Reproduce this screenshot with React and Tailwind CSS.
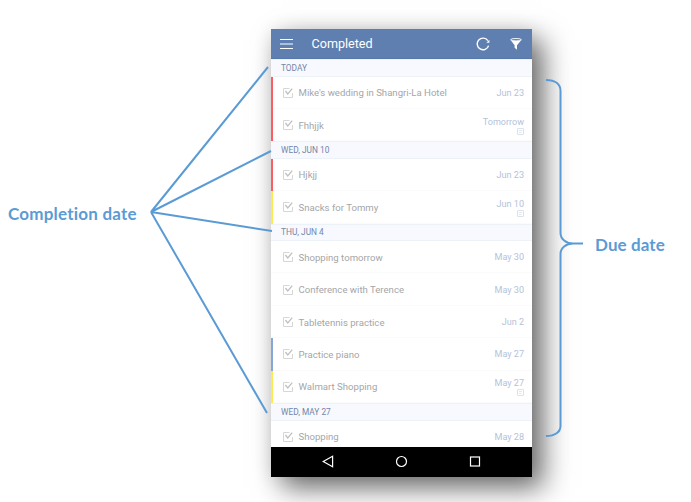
import React from "react";

const sections = [
  {
    title: "TODAY",
    rows: [
      { text: "Mike's wedding in Shangri-La Hotel", date: "Jun 23", bar: "bg-[#fb5d60]" },
      { text: "Fhhjjk", date: "Tomorrow", note: true, bar: "bg-[#fb5d60]" },
    ],
  },
  {
    title: "WED, JUN 10",
    rows: [
      { text: "Hjkjj", date: "Jun 23", bar: "bg-[#fb5d60]" },
      { text: "Snacks for Tommy", date: "Jun 10", note: true, bar: "bg-[#fdec4f]" },
    ],
  },
  {
    title: "THU, JUN 4",
    rows: [
      { text: "Shopping tomorrow", date: "May 30" },
      { text: "Conference with Terence", date: "May 30" },
      { text: "Tabletennis practice", date: "Jun 2" },
      { text: "Practice piano", date: "May 27", bar: "bg-[#86a6d8]" },
      { text: "Walmart Shopping", date: "May 27", note: true, bar: "bg-[#fdec4f]" },
    ],
  },
  { title: "WED, MAY 27", rows: [{ text: "Shopping", date: "May 28" }] },
];

function CheckIcon() {
  return (
    <svg className="ml-[9px] h-[12px] w-[12px] shrink-0" viewBox="0 0 12 12" fill="none">
      <path d="M7.5 1.5H1.5V10.5H10.5V6" stroke="#d6d6d6" strokeWidth="1" />
      <path d="M3.4 4L5.8 7L10.2 1.6" stroke="#c0c0c0" strokeWidth="1.3" />
    </svg>
  );
}

function NoteIcon() {
  return (
    <svg className="h-[7px] w-[7px]" viewBox="0 0 7 7" fill="none" stroke="#dbe2ee">
      <rect x="0.5" y="0.5" width="6" height="6" rx="0.5" />
      <path d="M2 2.5H5M2 4.5H4.5" strokeWidth="0.8" />
    </svg>
  );
}

function Row({ text, date, note, bar }) {
  return (
    <div className="flex h-[32.4px] shrink-0 items-center pr-[8px] shadow-[inset_0_-1px_#fbfbfb]">
      <div className={"h-[32.4px] w-[2px] shrink-0 " + (bar || "bg-transparent")} />
      <CheckIcon />
      <span className="ml-[4.5px] flex-1 whitespace-nowrap pt-px text-[9.6px] leading-[12px] text-[#a5a6a8]">{text}</span>
      <span className="flex flex-col items-end pt-px text-[9.05px] leading-[11px] text-[#b4c2da]">
        {date}
        {note && <NoteIcon />}
      </span>
    </div>
  );
}

function Phone() {
  return (
    <div className="flex h-[448px] w-[261px] shrink-0 flex-col bg-white font-[Roboto,sans-serif] shadow-[11px_11px_26px_rgba(0,0,0,0.58),0_0_18px_rgba(0,0,0,0.08)]">
      <header className="flex h-[30px] shrink-0 items-center border-b border-[#5577a9] bg-[#5f7fb1] pl-[9px] pr-[10.5px] text-white">
        <svg className="h-[12px] w-[13px]" viewBox="0 0 13 12" stroke="#fff" strokeWidth="1.2">
          <path d="M0 1.5H13M0 6H13M0 10.5H13" />
        </svg>
        <h1 className="ml-[18.5px] flex-1 pt-px text-[12.6px] leading-[16px]">Completed</h1>
        <svg className="h-[14px] w-[14px]" viewBox="0 0 14 14" fill="none">
          <path d="M12.6 8.6A5.8 5.8 0 1 1 11.8 3.6" stroke="#fff" strokeWidth="1.4" />
          <path d="M13.4 2.8V5.8H10.4Z" fill="#fff" />
        </svg>
        <svg className="ml-[20px] h-[12px] w-[12px]" viewBox="0 0 12 12" fill="none">
          <path d="M0.4 1.8L4.6 7.2V9.8L7 11.8V7.2L11.6 1.8Z" fill="#fff" />
          <ellipse cx="6" cy="1.7" rx="5.3" ry="1.2" stroke="#fff" strokeWidth="0.9" fill="#5f7fb1" />
        </svg>
      </header>
      <main className="flex h-[387.5px] shrink-0 flex-col overflow-hidden">
        {sections.map((s) => (
          <React.Fragment key={s.title}>
            <h2 className="flex h-[17.5px] shrink-0 items-center border-y border-[#edf1f8] bg-[#f7f9fe] pl-[10px] text-[8.35px] leading-[10px] text-[#7385a8]">
              {s.title}
            </h2>
            {s.rows.map((r) => (
              <Row key={r.text} {...r} />
            ))}
          </React.Fragment>
        ))}
      </main>
      <footer className="flex flex-1 items-center bg-black pl-[51px] pr-[51px]">
        <svg className="h-[13px] w-[159px]" viewBox="0 0 159 13" fill="none" stroke="#fff" strokeWidth="1.2">
          <path d="M1.2 6.5L10.6 1.2V11.8Z" />
          <circle cx="79.5" cy="6.5" r="5" />
          <rect x="148.5" y="2" width="9" height="9" />
        </svg>
      </footer>
    </div>
  );
}

export default function App() {
  return (
    <div className="relative flex h-[502px] w-[691px] overflow-hidden bg-white pt-[29px]">
      <div className="w-[271px] shrink-0 pl-[8px] pt-[174px] font-[Lato,sans-serif] text-[17px] font-bold leading-[22px] tracking-[0.22px] text-[#5b9bd5] [font-variant-ligatures:none]">
        Completion date
      </div>
      <Phone />
      <div className="whitespace-nowrap pl-[63px] pt-[205px] font-[Lato,sans-serif] text-[17px] font-bold leading-[22px] tracking-[0.1px] text-[#5b9bd5]">
        Due date
      </div>
      <svg
        className="pointer-events-none absolute inset-0 h-[502px] w-[691px]"
        viewBox="0 0 691 502"
        fill="none"
        stroke="#5b9bd5"
        strokeWidth="2"
      >
        <path d="M268 67L151 212L271 151M151 212L272 231M151 212L267 413" />
        <path d="M546 80C555 80 560.5 84 560.5 91V233C560.5 239 566 243.5 573 243.5H583M573 243.5C566 243.5 560.5 248 560.5 254V426C560.5 432 555 436 546 436" />
      </svg>
    </div>
  );
}
